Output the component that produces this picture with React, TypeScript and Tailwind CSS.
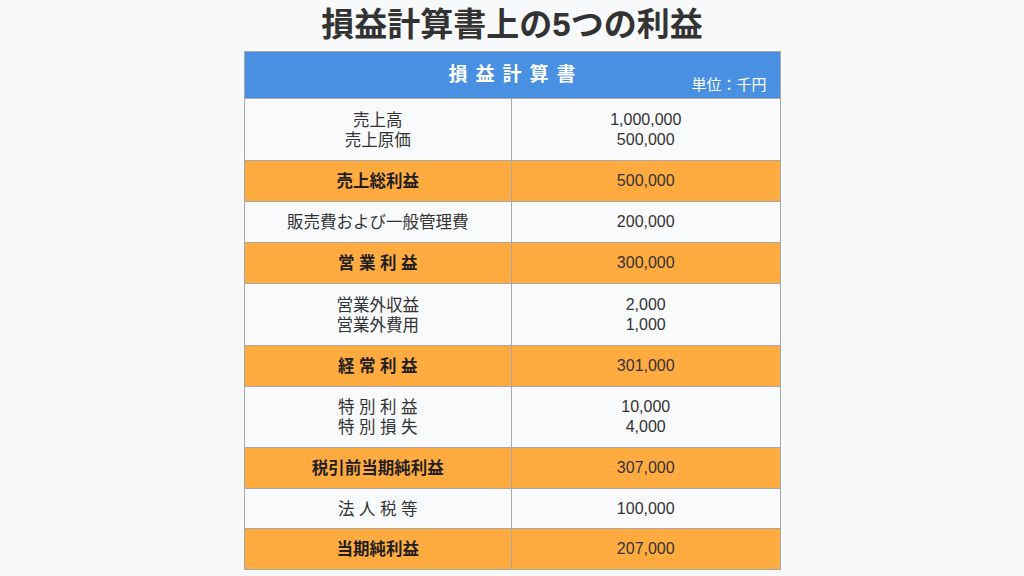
const font = { fontFamily: '"Liberation Sans", "Noto Sans CJK JP", sans-serif' };

type Row = {
  labels: string[];
  values: string[];
  h: string;
  total?: boolean;
  spaced?: boolean;
};

const rows: Row[] = [
  { labels: ['売上高', '売上原価'], values: ['1,000,000', '500,000'], h: 'h-[62px]' },
  { labels: ['売上総利益'], values: ['500,000'], h: 'h-[41px]', total: true },
  { labels: ['販売費および一般管理費'], values: ['200,000'], h: 'h-[41px]' },
  { labels: ['営業利益'], values: ['300,000'], h: 'h-[41px]', total: true, spaced: true },
  { labels: ['営業外収益', '営業外費用'], values: ['2,000', '1,000'], h: 'h-[62px]' },
  { labels: ['経常利益'], values: ['301,000'], h: 'h-[41px]', total: true, spaced: true },
  { labels: ['特別利益', '特別損失'], values: ['10,000', '4,000'], h: 'h-[61px]', spaced: true },
  { labels: ['税引前当期純利益'], values: ['307,000'], h: 'h-[41px]', total: true },
  { labels: ['法人税等'], values: ['100,000'], h: 'h-[40px]', spaced: true },
  { labels: ['当期純利益'], values: ['207,000'], h: 'h-[41px]', total: true },
];

function TableRow({ row }: { row: Row }) {
  const bg = row.total ? 'bg-[#ffab40]' : 'bg-[#f9fafb]';
  return (
    <div className={`grid grid-cols-2 border-t border-[#a8a8a8] ${bg} ${row.h}`}>
      <div className="flex flex-col items-center justify-center border-r border-[#a8a8a8] text-[16.5px] leading-[20px]">
        {row.labels.map((l) => (
          <span
            key={l}
            className={`${row.total ? 'font-bold text-[#1f1f1f]' : 'text-[#333333]'} ${row.spaced ? 'tracking-[4.5px] pl-[4.5px]' : ''}`}
          >
            {l}
          </span>
        ))}
      </div>
      <div className="flex flex-col items-center justify-center text-[16px] leading-[20px] text-[#333333]">
        {row.values.map((v) => (
          <span key={v}>{v}</span>
        ))}
      </div>
    </div>
  );
}

export default function App() {
  return (
    <div className="min-h-screen bg-[#f8f9fa] flex flex-col items-center" style={font}>
      <h1 className="mt-[5px] text-[33px] leading-[40px] font-bold text-[#333333]">
        損益計算書上の5つの利益
      </h1>
      <div className="mt-[6px] w-[537px] border border-[#a8a8a8]">
        <div className="relative h-[46px] bg-[#4a90e2] flex items-center justify-center">
          <span className="text-[19px] font-bold text-white tracking-[8px] pl-[8px]">損益計算書</span>
          <span className="absolute right-[13px] bottom-[2px] text-[15px] text-white">単位：千円</span>
        </div>
        {rows.map((r) => (
          <TableRow key={r.labels[0]} row={r} />
        ))}
      </div>
    </div>
  );
}
